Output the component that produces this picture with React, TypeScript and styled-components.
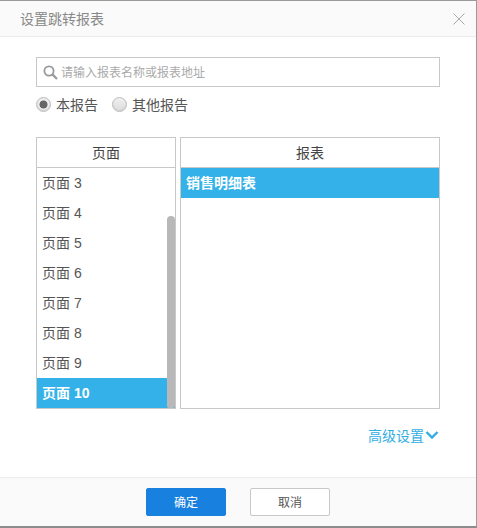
import React from "react";
import styled, { createGlobalStyle } from "styled-components";

const Global = createGlobalStyle`
  html, body { margin: 0; padding: 0; background: #fff; }
  body { font-family: "Liberation Sans", "Noto Sans CJK SC", sans-serif; }
  * { box-sizing: border-box; }
`;

const Dialog = styled.div`
  width: 477px;
  height: 528px;
  display: flex;
  flex-direction: column;
  background: #fff;
  border-top: 1px solid #9a9a9a;
  border-right: 1px solid #9a9a9a;
  border-bottom: 2px solid #8c8c8c;
`;

const Header = styled.div`
  height: 36px;
  flex: none;
  display: flex;
  align-items: center;
  justify-content: space-between;
  padding: 0 11px 0 20px;
  background: #fafafa;
  border-bottom: 1px solid #ececec;
`;

const Title = styled.div`
  font-size: 14px;
  color: #888;
  padding-bottom: 2px;
`;

const Close = styled.svg`
  width: 12px;
  height: 12px;
  display: block;
`;

const Body = styled.div`
  flex: 1;
  padding: 20px 36px 0 36px;
  display: flex;
  flex-direction: column;
`;

const Search = styled.div`
  height: 30px;
  border: 1px solid #c8c8c8;
  display: flex;
  align-items: center;
  gap: 3px;
  padding-left: 6px;
`;

const SearchIcon = styled.svg`
  width: 15px;
  height: 15px;
  flex: none;
`;

const Placeholder = styled.span`
  font-size: 12px;
  color: #aaa;
  padding-bottom: 2px;
`;

const RadioRow = styled.div`
  height: 35px;
  display: flex;
  align-items: center;
  gap: 14px;
`;

const RadioItem = styled.label`
  display: flex;
  align-items: center;
  gap: 5px;
  font-size: 14px;
  color: #555;
`;

const RadioLabel = styled.span`
  padding-bottom: 1px;
`;

const RadioDot = styled.span<{ $on?: boolean }>`
  width: 15px;
  height: 15px;
  border-radius: 50%;
  border: 1px solid #bcbcbc;
  box-shadow: inset 0 -1px 1px #d0d0d0;
  background: ${(p) =>
    p.$on
      ? "radial-gradient(circle, #666 0 3.6px, #ececec 4.4px)"
      : "linear-gradient(#f0f0f0, #dcdcdc)"};
`;

const Lists = styled.div`
  margin-top: 15px;
  display: flex;
  gap: 4px;
  height: 272px;
`;

const Panel = styled.div<{ $w: number }>`
  width: ${(p) => p.$w}px;
  flex: none;
  border: 1px solid #c8c8c8;
  display: flex;
  flex-direction: column;
  position: relative;
  overflow: hidden;
`;

const PanelHead = styled.div`
  height: 30px;
  flex: none;
  border-bottom: 1px solid #c8c8c8;
  display: flex;
  align-items: center;
  justify-content: center;
  font-size: 14px;
  color: #444;
  padding-bottom: 2px;
`;

const Row = styled.div<{ $on?: boolean }>`
  height: 30px;
  flex: none;
  display: flex;
  align-items: center;
  padding: 0 0 2px 5px;
  font-size: 14px;
  color: ${(p) => (p.$on ? "#fff" : "#555")};
  font-weight: ${(p) => (p.$on ? 700 : 400)};
  background: ${(p) => (p.$on ? "#33b1e8" : "transparent")};
`;

const Scrollbar = styled.div`
  position: absolute;
  right: 0;
  top: 78px;
  bottom: 0;
  width: 8px;
  background: #b8b8b8;
  border-radius: 4px 4px 2px 2px;
`;

const Advanced = styled.div`
  margin-top: 16px;
  padding-right: 1px;
  display: flex;
  justify-content: flex-end;
  align-items: center;
  gap: 1px;
  font-size: 14px;
  color: #33aee3;
`;

const Chevron = styled.svg`
  width: 14px;
  height: 10px;
`;

const Footer = styled.div`
  height: 49px;
  flex: none;
  background: #fafafa;
  border-top: 1px solid #ececec;
  display: flex;
  justify-content: center;
  align-items: flex-start;
  gap: 24px;
  padding-top: 10px;
`;

const Button = styled.div<{ $primary?: boolean }>`
  width: 80px;
  height: 28px;
  border-radius: 2px;
  display: flex;
  align-items: center;
  justify-content: center;
  font-size: 12px;
  padding-bottom: 2px;
  color: ${(p) => (p.$primary ? "#fff" : "#555")};
  background: ${(p) => (p.$primary ? "#1880de" : "#fff")};
  border: 1px solid ${(p) => (p.$primary ? "#1880de" : "#c8c8c8")};
`;

const pages = ["页面 3", "页面 4", "页面 5", "页面 6", "页面 7", "页面 8", "页面 9", "页面 10"];

export default function App() {
  return (
    <>
      <Global />
      <Dialog>
        <Header>
          <Title>设置跳转报表</Title>
          <Close viewBox="0 0 12 12">
            <path d="M.5.5l11 11M11.5.5l-11 11" stroke="#aaa" strokeWidth="1" fill="none" />
          </Close>
        </Header>
        <Body>
          <Search>
            <SearchIcon viewBox="0 0 15 15">
              <circle cx="6" cy="6" r="4.6" stroke="#999" strokeWidth="1.8" fill="none" />
              <path d="M9.4 9.4L14 14" stroke="#999" strokeWidth="2.2" fill="none" />
            </SearchIcon>
            <Placeholder>请输入报表名称或报表地址</Placeholder>
          </Search>
          <RadioRow>
            <RadioItem><RadioDot $on /><RadioLabel>本报告</RadioLabel></RadioItem>
            <RadioItem><RadioDot /><RadioLabel>其他报告</RadioLabel></RadioItem>
          </RadioRow>
          <Lists>
            <Panel $w={140}>
              <PanelHead>页面</PanelHead>
              {pages.map((p, i) => (
                <Row key={p} $on={i === 7}>{p}</Row>
              ))}
              <Scrollbar />
            </Panel>
            <Panel $w={260}>
              <PanelHead>报表</PanelHead>
              <Row $on>销售明细表</Row>
            </Panel>
          </Lists>
          <Advanced>
            高级设置
            <Chevron viewBox="0 0 14 10">
              <path d="M1.5 2l5.5 5.5L12.5 2" stroke="#33aee3" strokeWidth="2.4" fill="none" />
            </Chevron>
          </Advanced>
        </Body>
        <Footer>
          <Button $primary>确定</Button>
          <Button>取消</Button>
        </Footer>
      </Dialog>
    </>
  );
}
